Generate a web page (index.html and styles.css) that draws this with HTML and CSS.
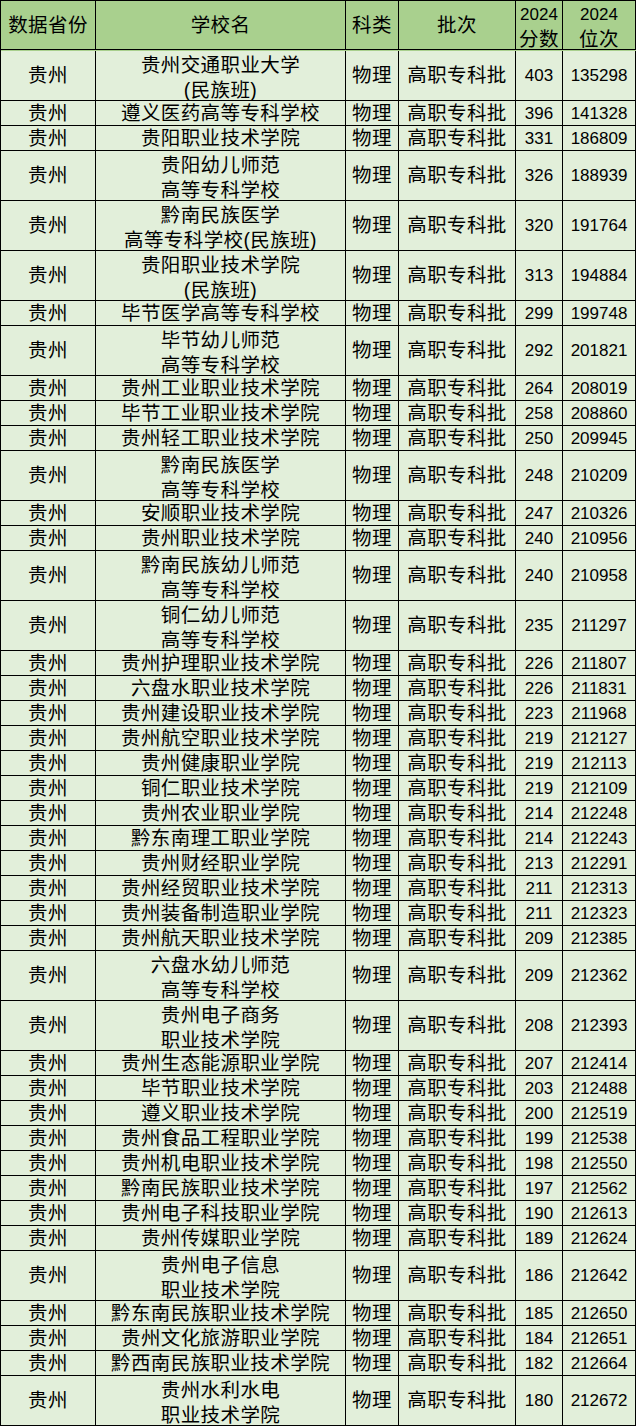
FILE: index.html
```html
<!DOCTYPE html>
<html lang="zh">
<head>
<meta charset="utf-8">
<link rel="stylesheet" href="styles.css">
</head>
<body>
<div class="sheet">
  <div class="row head">
    <div class="c cjk">数据省份</div><div class="c cjk">学校名</div><div class="c cjk">科类</div><div class="c cjk">批次</div><div class="c mix"><span class="num">2024</span><span class="cjk">分数</span></div><div class="c mix"><span class="num">2024</span><span class="cjk">位次</span></div>
  </div>
  <div class="row tall"><div class="c cjk">贵州</div><div class="c cjk">贵州交通职业大学<br>(民族班)</div><div class="c cjk">物理</div><div class="c cjk">高职专科批</div><div class="c num">403</div><div class="c num">135298</div></div>
  <div class="row"><div class="c cjk">贵州</div><div class="c cjk">遵义医药高等专科学校</div><div class="c cjk">物理</div><div class="c cjk">高职专科批</div><div class="c num">396</div><div class="c num">141328</div></div>
  <div class="row"><div class="c cjk">贵州</div><div class="c cjk">贵阳职业技术学院</div><div class="c cjk">物理</div><div class="c cjk">高职专科批</div><div class="c num">331</div><div class="c num">186809</div></div>
  <div class="row tall"><div class="c cjk">贵州</div><div class="c cjk">贵阳幼儿师范<br>高等专科学校</div><div class="c cjk">物理</div><div class="c cjk">高职专科批</div><div class="c num">326</div><div class="c num">188939</div></div>
  <div class="row tall"><div class="c cjk">贵州</div><div class="c cjk">黔南民族医学<br>高等专科学校(民族班)</div><div class="c cjk">物理</div><div class="c cjk">高职专科批</div><div class="c num">320</div><div class="c num">191764</div></div>
  <div class="row tall"><div class="c cjk">贵州</div><div class="c cjk">贵阳职业技术学院<br>(民族班)</div><div class="c cjk">物理</div><div class="c cjk">高职专科批</div><div class="c num">313</div><div class="c num">194884</div></div>
  <div class="row"><div class="c cjk">贵州</div><div class="c cjk">毕节医学高等专科学校</div><div class="c cjk">物理</div><div class="c cjk">高职专科批</div><div class="c num">299</div><div class="c num">199748</div></div>
  <div class="row tall"><div class="c cjk">贵州</div><div class="c cjk">毕节幼儿师范<br>高等专科学校</div><div class="c cjk">物理</div><div class="c cjk">高职专科批</div><div class="c num">292</div><div class="c num">201821</div></div>
  <div class="row"><div class="c cjk">贵州</div><div class="c cjk">贵州工业职业技术学院</div><div class="c cjk">物理</div><div class="c cjk">高职专科批</div><div class="c num">264</div><div class="c num">208019</div></div>
  <div class="row"><div class="c cjk">贵州</div><div class="c cjk">毕节工业职业技术学院</div><div class="c cjk">物理</div><div class="c cjk">高职专科批</div><div class="c num">258</div><div class="c num">208860</div></div>
  <div class="row"><div class="c cjk">贵州</div><div class="c cjk">贵州轻工职业技术学院</div><div class="c cjk">物理</div><div class="c cjk">高职专科批</div><div class="c num">250</div><div class="c num">209945</div></div>
  <div class="row tall"><div class="c cjk">贵州</div><div class="c cjk">黔南民族医学<br>高等专科学校</div><div class="c cjk">物理</div><div class="c cjk">高职专科批</div><div class="c num">248</div><div class="c num">210209</div></div>
  <div class="row"><div class="c cjk">贵州</div><div class="c cjk">安顺职业技术学院</div><div class="c cjk">物理</div><div class="c cjk">高职专科批</div><div class="c num">247</div><div class="c num">210326</div></div>
  <div class="row"><div class="c cjk">贵州</div><div class="c cjk">贵州职业技术学院</div><div class="c cjk">物理</div><div class="c cjk">高职专科批</div><div class="c num">240</div><div class="c num">210956</div></div>
  <div class="row tall"><div class="c cjk">贵州</div><div class="c cjk">黔南民族幼儿师范<br>高等专科学校</div><div class="c cjk">物理</div><div class="c cjk">高职专科批</div><div class="c num">240</div><div class="c num">210958</div></div>
  <div class="row tall"><div class="c cjk">贵州</div><div class="c cjk">铜仁幼儿师范<br>高等专科学校</div><div class="c cjk">物理</div><div class="c cjk">高职专科批</div><div class="c num">235</div><div class="c num">211297</div></div>
  <div class="row"><div class="c cjk">贵州</div><div class="c cjk">贵州护理职业技术学院</div><div class="c cjk">物理</div><div class="c cjk">高职专科批</div><div class="c num">226</div><div class="c num">211807</div></div>
  <div class="row"><div class="c cjk">贵州</div><div class="c cjk">六盘水职业技术学院</div><div class="c cjk">物理</div><div class="c cjk">高职专科批</div><div class="c num">226</div><div class="c num">211831</div></div>
  <div class="row"><div class="c cjk">贵州</div><div class="c cjk">贵州建设职业技术学院</div><div class="c cjk">物理</div><div class="c cjk">高职专科批</div><div class="c num">223</div><div class="c num">211968</div></div>
  <div class="row"><div class="c cjk">贵州</div><div class="c cjk">贵州航空职业技术学院</div><div class="c cjk">物理</div><div class="c cjk">高职专科批</div><div class="c num">219</div><div class="c num">212127</div></div>
  <div class="row"><div class="c cjk">贵州</div><div class="c cjk">贵州健康职业学院</div><div class="c cjk">物理</div><div class="c cjk">高职专科批</div><div class="c num">219</div><div class="c num">212113</div></div>
  <div class="row"><div class="c cjk">贵州</div><div class="c cjk">铜仁职业技术学院</div><div class="c cjk">物理</div><div class="c cjk">高职专科批</div><div class="c num">219</div><div class="c num">212109</div></div>
  <div class="row"><div class="c cjk">贵州</div><div class="c cjk">贵州农业职业学院</div><div class="c cjk">物理</div><div class="c cjk">高职专科批</div><div class="c num">214</div><div class="c num">212248</div></div>
  <div class="row"><div class="c cjk">贵州</div><div class="c cjk">黔东南理工职业学院</div><div class="c cjk">物理</div><div class="c cjk">高职专科批</div><div class="c num">214</div><div class="c num">212243</div></div>
  <div class="row"><div class="c cjk">贵州</div><div class="c cjk">贵州财经职业学院</div><div class="c cjk">物理</div><div class="c cjk">高职专科批</div><div class="c num">213</div><div class="c num">212291</div></div>
  <div class="row"><div class="c cjk">贵州</div><div class="c cjk">贵州经贸职业技术学院</div><div class="c cjk">物理</div><div class="c cjk">高职专科批</div><div class="c num">211</div><div class="c num">212313</div></div>
  <div class="row"><div class="c cjk">贵州</div><div class="c cjk">贵州装备制造职业学院</div><div class="c cjk">物理</div><div class="c cjk">高职专科批</div><div class="c num">211</div><div class="c num">212323</div></div>
  <div class="row"><div class="c cjk">贵州</div><div class="c cjk">贵州航天职业技术学院</div><div class="c cjk">物理</div><div class="c cjk">高职专科批</div><div class="c num">209</div><div class="c num">212385</div></div>
  <div class="row tall"><div class="c cjk">贵州</div><div class="c cjk">六盘水幼儿师范<br>高等专科学校</div><div class="c cjk">物理</div><div class="c cjk">高职专科批</div><div class="c num">209</div><div class="c num">212362</div></div>
  <div class="row tall"><div class="c cjk">贵州</div><div class="c cjk">贵州电子商务<br>职业技术学院</div><div class="c cjk">物理</div><div class="c cjk">高职专科批</div><div class="c num">208</div><div class="c num">212393</div></div>
  <div class="row"><div class="c cjk">贵州</div><div class="c cjk">贵州生态能源职业学院</div><div class="c cjk">物理</div><div class="c cjk">高职专科批</div><div class="c num">207</div><div class="c num">212414</div></div>
  <div class="row"><div class="c cjk">贵州</div><div class="c cjk">毕节职业技术学院</div><div class="c cjk">物理</div><div class="c cjk">高职专科批</div><div class="c num">203</div><div class="c num">212488</div></div>
  <div class="row"><div class="c cjk">贵州</div><div class="c cjk">遵义职业技术学院</div><div class="c cjk">物理</div><div class="c cjk">高职专科批</div><div class="c num">200</div><div class="c num">212519</div></div>
  <div class="row"><div class="c cjk">贵州</div><div class="c cjk">贵州食品工程职业学院</div><div class="c cjk">物理</div><div class="c cjk">高职专科批</div><div class="c num">199</div><div class="c num">212538</div></div>
  <div class="row"><div class="c cjk">贵州</div><div class="c cjk">贵州机电职业技术学院</div><div class="c cjk">物理</div><div class="c cjk">高职专科批</div><div class="c num">198</div><div class="c num">212550</div></div>
  <div class="row"><div class="c cjk">贵州</div><div class="c cjk">黔南民族职业技术学院</div><div class="c cjk">物理</div><div class="c cjk">高职专科批</div><div class="c num">197</div><div class="c num">212562</div></div>
  <div class="row"><div class="c cjk">贵州</div><div class="c cjk">贵州电子科技职业学院</div><div class="c cjk">物理</div><div class="c cjk">高职专科批</div><div class="c num">190</div><div class="c num">212613</div></div>
  <div class="row"><div class="c cjk">贵州</div><div class="c cjk">贵州传媒职业学院</div><div class="c cjk">物理</div><div class="c cjk">高职专科批</div><div class="c num">189</div><div class="c num">212624</div></div>
  <div class="row tall"><div class="c cjk">贵州</div><div class="c cjk">贵州电子信息<br>职业技术学院</div><div class="c cjk">物理</div><div class="c cjk">高职专科批</div><div class="c num">186</div><div class="c num">212642</div></div>
  <div class="row"><div class="c cjk">贵州</div><div class="c cjk">黔东南民族职业技术学院</div><div class="c cjk">物理</div><div class="c cjk">高职专科批</div><div class="c num">185</div><div class="c num">212650</div></div>
  <div class="row"><div class="c cjk">贵州</div><div class="c cjk">贵州文化旅游职业学院</div><div class="c cjk">物理</div><div class="c cjk">高职专科批</div><div class="c num">184</div><div class="c num">212651</div></div>
  <div class="row"><div class="c cjk">贵州</div><div class="c cjk">黔西南民族职业技术学院</div><div class="c cjk">物理</div><div class="c cjk">高职专科批</div><div class="c num">182</div><div class="c num">212664</div></div>
  <div class="row tall"><div class="c cjk">贵州</div><div class="c cjk">贵州水利水电<br>职业技术学院</div><div class="c cjk">物理</div><div class="c cjk">高职专科批</div><div class="c num">180</div><div class="c num">212672</div></div>
</div>
</body>
</html>
```

FILE: styles.css
```css
html, body {
  margin: 0;
  padding: 0;
  background: #ffffff;
}

.sheet {
  width: 636px;
  box-sizing: border-box;
  border-top: 1px solid #000;
  border-left: 1px solid #000;
  background: #e2efda;
  color: #000;
  font-family: "Liberation Sans", "Noto Sans CJK SC", sans-serif;
}

.row {
  display: grid;
  grid-template-columns: 95px 250px 53px 117px 47px 73px;
  height: 25px;
  box-sizing: border-box;
}

.row.tall,
.row.head {
  height: 50px;
}

.row.head {
  background: #a9d08e;
}

.c {
  display: flex;
  flex-direction: column;
  align-items: center;
  justify-content: center;
  text-align: center;
  box-sizing: border-box;
  border-right: 1px solid #000;
  border-bottom: 1px solid #000;
  line-height: 25px;
  white-space: nowrap;
  overflow: hidden;
}

.row.tall .c:nth-child(2) {
  padding-top: 4px;
  line-height: 24.5px;
}

.row:first-child .c {
  height: 49px;
}

.cjk {
  font-size: 19.5px;
  letter-spacing: 0.4px;
}

.num {
  font-size: 17px;
}

.mix {
  padding-top: 3px;
}

.mix .num,
.mix .cjk {
  display: block;
  line-height: 24px;
}
```
